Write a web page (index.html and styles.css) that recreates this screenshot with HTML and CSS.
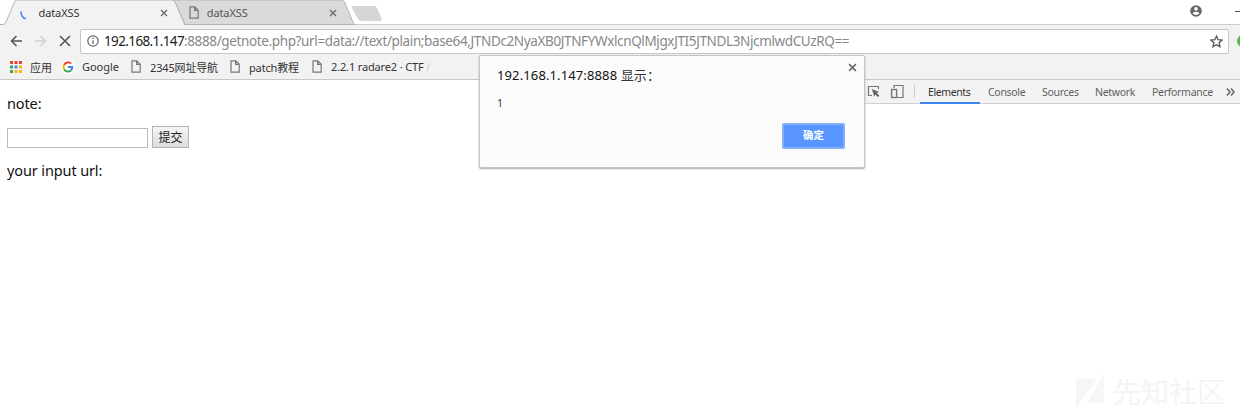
FILE: index.html
```html
<!DOCTYPE html>
<html lang="zh">
<head>
<meta charset="utf-8">
<title>dataXSS</title>
<link rel="stylesheet" href="styles.css">
</head>
<body>
<svg class="defs" width="0" height="0"><defs>
<symbol id="doc" viewBox="0 0 10 13"><path d="M1 .8h4.8L9.2 4.2v8H1zM5.6 1v3.4H9" fill="none" stroke="#777" stroke-width="1.2"/></symbol>
<symbol id="x" viewBox="0 0 8 8"><path d="M1 1l6 6M7 1L1 7" fill="none" stroke="currentColor" stroke-width="1.3"/></symbol>
</defs></svg>
<header class="tabstrip">
  <svg class="tab-shapes" width="1240" height="25" viewBox="0 0 1240 25">
    <path d="M0 24.5H1240" stroke="#ccc"/>
    <path d="M174 0H341.500Q343.500 0 344.500 2L354 24.500H185L174 0z" fill="#dadada" stroke="#b4b4b4"/>
    <path d="M352 8Q351 6 353 6H374Q376 6 377 8L381.500 18.500Q382.500 21 380 21H361Q359 21 358 19z" fill="#d5d5d5"/>
    <path d="M0 25H3Q5 25 6 22L15 1Q15.500 0 17 0H172Q174 0 175 2L185 25z" fill="#f2f2f2"/>
    <path d="M0 24.500H3Q5 24.500 6 22L15 1Q15.500 0 17 0H172Q174 0 175 2L185 25" fill="none" stroke="#b4b4b4"/>
  </svg>
  <div class="tab first"><svg class="spin" width="8" height="9" viewBox="0 0 8 9"><path d="M1 .5C.8 4 3 7 6 7.800" fill="none" stroke="#4285f4" stroke-width="1.700"/></svg><span class="tab-title">dataXSS</span><svg class="close" width="8" height="8"><use href="#x"/></svg></div>
  <div class="tab second"><svg width="10" height="13"><use href="#doc"/></svg><span class="tab-title">dataXSS</span><svg class="close" width="8" height="8"><use href="#x"/></svg></div>
  <svg class="user" width="12" height="12" viewBox="0 0 12 12"><circle cx="6" cy="6" r="5.800" fill="#666"/><circle cx="6" cy="3.900" r="1.800" fill="#fff"/><path d="M2.400 8.300Q6 5.400 9.600 8.300Q6 11.800 2.400 8.300" fill="#fff"/></svg>
  <span class="minimize"></span>
</header>
<nav class="toolbar">
  <svg width="62" height="14" viewBox="0 0 62 14" fill="none" stroke-width="1.600"><path d="M13 7H2M7.500 2L2.500 7l5 5" stroke="#555"/><path d="M26 7H36.500M31.500 2l5 5-5 5" stroke="#d0d0d0"/><path d="M51 2l10 10M61 2L51 12" stroke="#555"/></svg>
  <div class="omnibox">
    <svg width="12" height="12" viewBox="0 0 12 12"><circle cx="6" cy="6" r="5.200" fill="none" stroke="#666" stroke-width="1.200"/><path d="M6 5.200V9M6 2.800V4.100" stroke="#666" stroke-width="1.300"/></svg>
    <span class="url"><b>192.168.1.147</b><span class="rest">:8888/getnote.php?url=data://text/plain;base64,JTNDc2NyaXB0JTNFYWxlcnQlMjgxJTI5JTNDL3NjcmlwdCUzRQ==</span></span>
    <svg class="star" width="13" height="13" viewBox="0 0 12 12"><path d="M6 1l1.500 3.300 3.700.4-2.800 2.400.8 3.700L6 8.900l-3.200 1.900.8-3.700L.8 4.700l3.700-.4z" fill="none" stroke="#555" stroke-width="1.200"/></svg>
  </div>
  <span class="extension"></span>
</nav>
<nav class="bookmarks">
  <div class="bm apps"><svg width="12" height="12" viewBox="0 0 12 12"><path d="M0 0h3v3H0zM4.500 0h3v3h-3zM9 0h3v3H9z" fill="#ea4335"/><path d="M0 4.500h3v3H0z" fill="#34a853"/><path d="M4.500 4.500h3v3h-3z" fill="#4285f4"/><path d="M9 4.500h3v3H9zM4.500 9h3v3h-3zM9 9h3v3H9z" fill="#fbb605"/><path d="M0 9h3v3H0z" fill="#34a853"/></svg><span>应用</span></div>
  <div class="bm google"><svg width="14" height="14" viewBox="0 0 14 14"><rect width="14" height="14" rx="7" fill="#fff"/><g fill="none" stroke-width="2"><path d="M10.200 3.600A4.500 4.500 0 0 0 3 5" stroke="#ea4335"/><path d="M3 5A4.500 4.500 0 0 0 3 9.200" stroke="#fbbc05"/><path d="M3 9.200A4.500 4.500 0 0 0 9.900 10.500" stroke="#34a853"/><path d="M9.900 10.500Q11.500 9.200 11.300 7H7" stroke="#4285f4"/></g></svg><span>Google</span></div>
  <div class="bm site"><svg width="10" height="13"><use href="#doc"/></svg><span>2345网址导航</span></div>
  <div class="bm patch"><svg width="10" height="13"><use href="#doc"/></svg><span>patch教程</span></div>
  <div class="bm radare"><svg width="10" height="13"><use href="#doc"/></svg><span>2.2.1 radare2 · CTF <i>/</i></span></div>
</nav>
<main class="content">
  <section class="page">
    <p class="note">note:</p>
    <form class="form"><input class="field" type="text"><button class="submit" type="button">提交</button></form>
    <p class="result">your input url:</p>
  </section>
  <aside class="devtools">
    <div class="devbar">
      <svg width="37" height="15" viewBox="0 0 37 15"><path d="M5 11.500H1.500V2.500H11.500V5" fill="none" stroke="#777" stroke-width="1.200"/><path d="M4.800 5l7.400 2.900-2.500 1.200 2.600 2.700-1.400 1.300-2.500-2.700-1 2.300z" fill="#666"/><path d="M27 4V1.500h9v12h-6" fill="none" stroke="#777" stroke-width="1.200"/><rect x="24.600" y="5.500" width="5" height="8" fill="none" stroke="#777" stroke-width="1.400"/></svg>
      <span class="divider"></span>
      <span class="devtab active">Elements</span>
      <span class="devtab w-console">Console</span>
      <span class="devtab w-sources">Sources</span>
      <span class="devtab w-network">Network</span>
      <span class="devtab w-performance">Performance</span>
      <svg width="9" height="8" viewBox="0 0 9 8"><path d="M1 .5L4 4 1 7.500M5 .5L8 4 5 7.500" fill="none" stroke="#666" stroke-width="1.500"/></svg>
    </div>
  </aside>
</main>
<div class="dialog">
  <div class="dialog-head"><span class="dialog-title"><span class="host">192.168.1.147:8888</span> 显示：</span><svg width="9" height="9"><use href="#x"/></svg></div>
  <p class="message">1</p>
  <button class="confirm" type="button">确定</button>
</div>
<div class="watermark"><svg width="29" height="35" viewBox="0 0 29 35"><path d="M0 5H21L0 34zM28 0V29H11z" fill="#f6f6f6"/></svg><span>先知社区</span></div>
</body>
</html>
```
FILE: styles.css
```css
* { box-sizing: border-box; }
body { margin: 0; width: 1240px; height: 412px; overflow: hidden; position: relative; background: #fff; color: #111; font-family: "Noto Sans", "Noto Sans CJK SC", sans-serif; display: flex; flex-direction: column; }
p { margin: 0; }
svg { flex: none; display: block; }
span { white-space: nowrap; }
.defs { position: absolute; }
.tabstrip { height: 25px; flex: none; display: flex; align-items: center; position: relative; }
.tab-shapes { position: absolute; left: 0; top: 0; }
.tab { position: relative; display: flex; align-items: center; height: 25px; font-size: 11px; letter-spacing: -.1px; color: #333; }
.first { width: 169px; padding-left: 20px; }
.first .spin { margin-top: 6px; }
.first .tab-title { margin-left: 10.5px; }
.second { width: 169.5px; padding-left: 21px; }
.second .tab-title { margin-left: 7.5px; color: #555; }
.close { margin-left: auto; color: #666; }
.user { margin-left: 853px; margin-top: -4px; }
.minimize { width: 5px; height: 1px; background: #555; margin-left: 33px; margin-top: -2px; }
.toolbar { height: 32px; flex: none; background: #f2f2f2; display: flex; align-items: center; padding-left: 9px; }
.omnibox { width: 1149px; flex: none; height: 25px; margin-left: 9px; border: 1px solid #c6c6c6; border-radius: 2px; background: #fff; display: flex; align-items: center; padding: 0 5px 0 6px; }
.url { margin-left: 5px; font-size: 13.5px; letter-spacing: -.62px; color: #888; line-height: 20px; }
.url b { color: #222; font-weight: 400; }
.url .rest { letter-spacing: -.37px; }
.star { margin-left: auto; }
.extension { margin-left: 8px; width: 12px; height: 12px; flex: none; border-radius: 6px; background: #55b94f; }
.bookmarks { height: 23px; flex: none; background: #f2f2f2; border-bottom: 1px solid #c8c8c8; display: flex; align-items: center; font-size: 11px; color: #333; padding: 0 0 3px 10px; }
.bm { display: flex; align-items: center; }
.bm i { font-style: normal; color: #ccc; }
.apps { width: 51px; gap: 8px; }
.google { width: 70px; gap: 7px; letter-spacing: -.05px; }
.site { width: 99px; gap: 9px; letter-spacing: -.15px; }
.patch { width: 82px; gap: 9px; letter-spacing: -.15px; }
.radare { gap: 9px; letter-spacing: -.15px; }
.content { flex: 1; display: flex; min-height: 0; }
.page { width: 864px; padding: 11px 7px; font-size: 14.5px; letter-spacing: -.12px; }
.note, .result { line-height: 24px; }
.form { display: flex; align-items: flex-end; gap: 4px; margin: 11px 0 10px; height: 22px; }
.field { width: 141px; height: 20px; border: 1px solid #bbb; padding: 0; background: #fff; }
.submit { width: 37px; height: 22px; border: 1px solid #b5b5b5; background: linear-gradient(#f5f5f5, #ddd); font: 12px "Noto Sans CJK SC", sans-serif; padding: 0; color: #222; line-height: 18px; }
.devtools { flex: 1; min-width: 0; }
.devbar { height: 24px; display: flex; align-items: center; background: #f3f3f3; border-bottom: 1px solid #d0d0d0; padding-left: 3px; font-size: 10.5px; letter-spacing: -.3px; color: #5f5f5f; }
.divider { height: 13px; width: 1px; background: #ccc; margin: 0 5px 0 10px; }
.devtab { width: 54px; }
.active { width: 60px; height: 24px; line-height: 24px; margin-right: 8px; padding-left: 8px; border-bottom: 2px solid #4285f4; letter-spacing: -.4px; color: #333; }
.active { letter-spacing: -.4px; }
.w-network { width: 57px; }
.w-performance { width: 74px; }
.w-sources { width: 53px; }
.dialog { position: absolute; left: 479px; top: 55px; width: 386px; height: 113px; background: #fbfbfb; border: 1px solid #c4c4c4; border-radius: 2px; box-shadow: 0 1px 2px #aaa; padding: 7px 7px 0 17px; }
.dialog-head { display: flex; justify-content: space-between; height: 26px; font-size: 13px; line-height: 25px; letter-spacing: .12px; color: #333; }
.dialog-head svg { color: #666; }
.host { color: #111; }
.message { font-size: 10.5px; line-height: 16px; margin-top: 6px; color: #333; }
.confirm { display: block; margin: 12px 12px 0 auto; width: 63px; height: 26px; border: 2px solid #86adf8; border-radius: 2px; background: #5a96ff; color: #fff; font: 700 10.5px/18px "Noto Sans CJK SC", sans-serif; padding: 0 0 2px; }
.watermark { position: absolute; left: 1076px; top: 374px; display: flex; align-items: center; gap: 8px; font-size: 28px; line-height: 34px; color: #f4f4f4; }
```
